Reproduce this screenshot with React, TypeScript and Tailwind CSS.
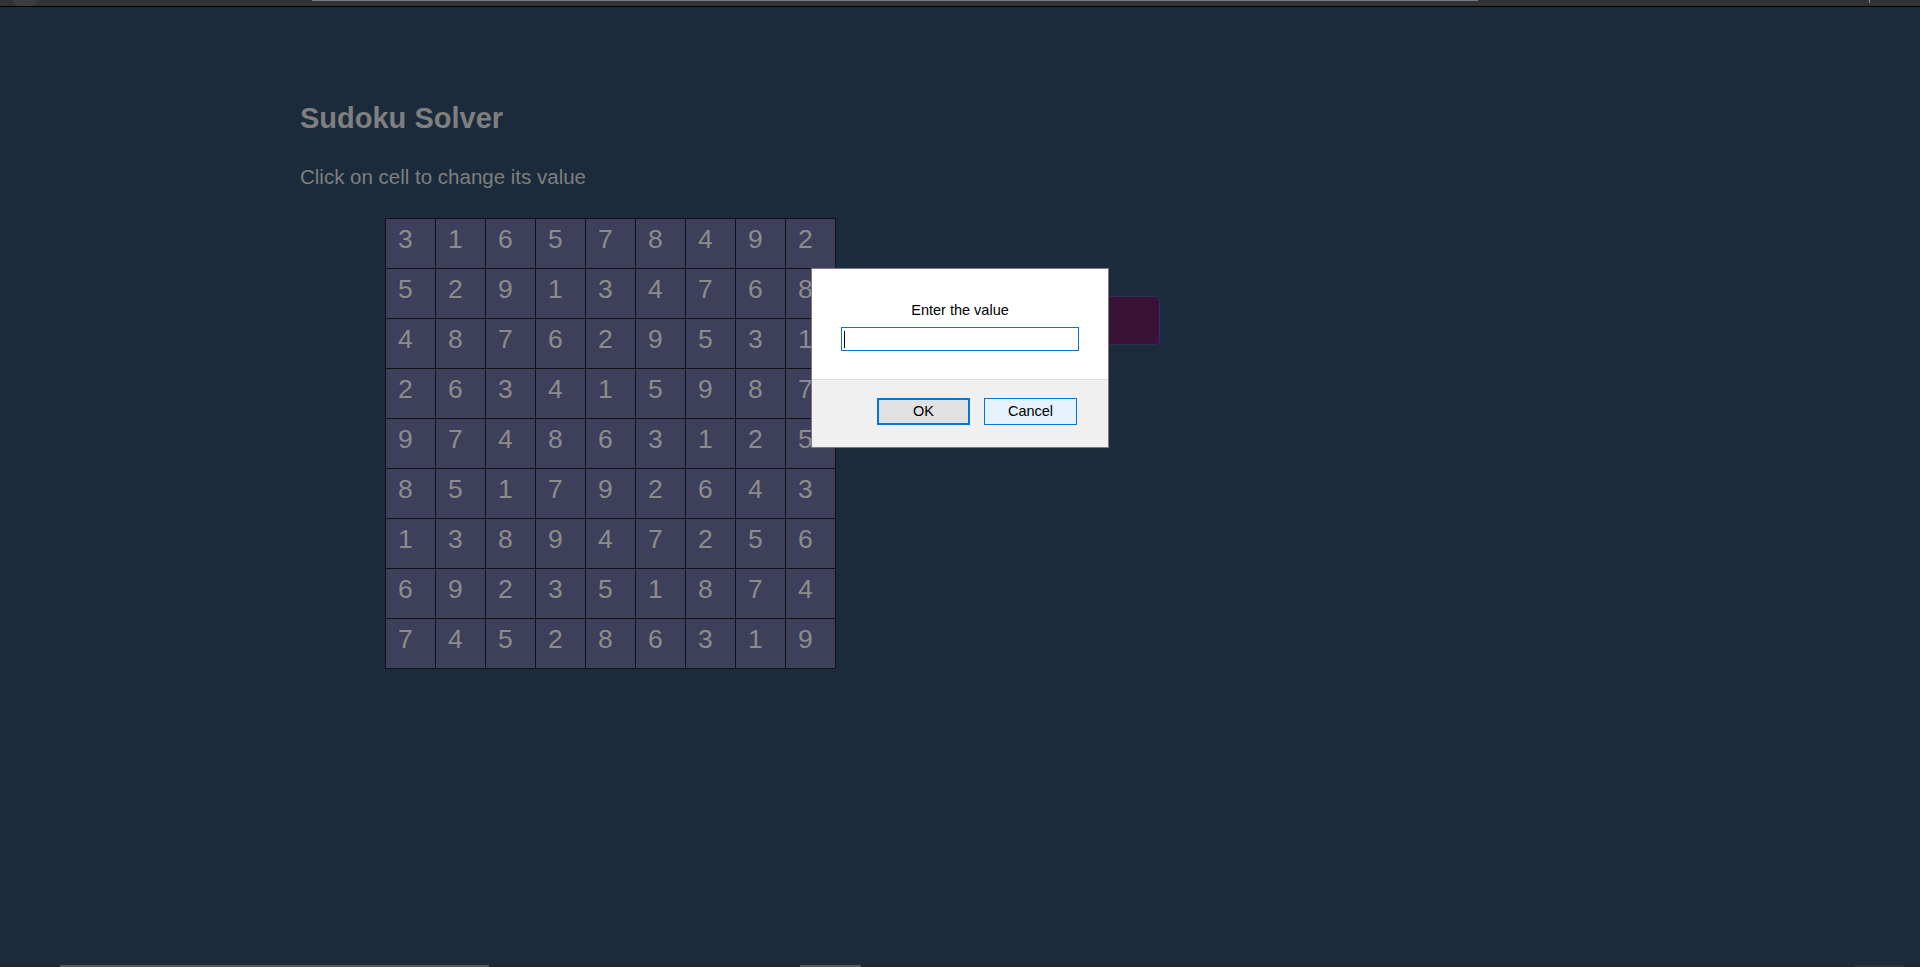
import React from "react";

const grid = [
  [3, 1, 6, 5, 7, 8, 4, 9, 2],
  [5, 2, 9, 1, 3, 4, 7, 6, 8],
  [4, 8, 7, 6, 2, 9, 5, 3, 1],
  [2, 6, 3, 4, 1, 5, 9, 8, 7],
  [9, 7, 4, 8, 6, 3, 1, 2, 5],
  [8, 5, 1, 7, 9, 2, 6, 4, 3],
  [1, 3, 8, 9, 4, 7, 2, 5, 6],
  [6, 9, 2, 3, 5, 1, 8, 7, 4],
  [7, 4, 5, 2, 8, 6, 3, 1, 9],
];

export default function App() {
  return (
    <div className="relative flex h-[967px] w-[1920px] flex-col overflow-hidden bg-[#1b2b3c] font-['Liberation_Sans',Arial,sans-serif]">
      {/* top browser strip */}
      <div className="flex h-[7px] shrink-0 items-start border-b border-black bg-[#333333]">
        <div className="ml-[13px] h-[6px] w-[24px] rounded-b-full bg-[#3d3d3d]" />
        <div className="ml-[275px] h-px w-[1166px] bg-[#7a7a7a]" />
        <div className="ml-[391px] h-[3px] w-px bg-[#8a8a8a]" />
      </div>

      {/* page content */}
      <div className="flex flex-1 flex-col pl-[300px] pt-[97px]">
        <h1 className="text-[29px] font-bold leading-none text-[#7f7f7f]">Sudoku Solver</h1>
        <p className="mt-[34px] text-[20.5px] leading-none text-[#7f7f7f]">Click on cell to change its value</p>
        <div className="mt-[30px] flex items-start">
          <div className="ml-[85px] grid grid-cols-9 gap-px border border-[#111118] bg-[#111118]">
            {grid.flat().map((v, i) => (
              <div
                key={i}
                className="h-[49px] w-[49px] bg-[#3e3f5a] pl-[12px] pt-[7px] text-[26.5px] leading-none text-[#8c8c8c]"
              >
                {v}
              </div>
            ))}
          </div>
          <button className="ml-[224px] mt-[78px] h-[49px] w-[100px] rounded-[4px] border border-[#2a2f66] bg-[#3a1238]" />
        </div>
      </div>

      {/* bottom strip */}
      <div className="flex h-[2px] shrink-0 bg-[#222426]">
        <div className="ml-[60px] h-[2px] w-[429px] bg-[#5a5a5a]" />
        <div className="ml-[311px] h-[2px] w-[61px] bg-[#5a5a5a]" />
        <div className="ml-[993px] h-[2px] w-[50px] bg-[#333333]" />
      </div>

      {/* prompt dialog */}
      <div className="absolute left-[811px] top-[268px] flex h-[180px] w-[298px] flex-col border border-[#7a7a7a] bg-white text-black">
        <div className="flex h-[111px] shrink-0 flex-col items-center border-b border-[#dfdfdf]">
          <div className="mt-[32px] text-[14.5px] leading-[18px]">Enter the value</div>
          <div className="mt-[8px] flex h-[24px] w-[238px] items-center border border-[#0078d7] pl-[2px]">
            <span className="h-[17px] w-px bg-black" />
          </div>
        </div>
        <div className="flex flex-1 items-start justify-end gap-[14px] bg-[#f0f0f0] pr-[31px] pt-[18px]">
          <button className="flex h-[27px] w-[93px] items-center justify-center border-2 border-[#0078d7] bg-[#e1e1e1] text-[14.5px] text-black">
            OK
          </button>
          <button className="flex h-[27px] w-[93px] items-center justify-center border border-[#0078d7] bg-[#e5f1fb] text-[14.5px] text-black">
            Cancel
          </button>
        </div>
      </div>
    </div>
  );
}
